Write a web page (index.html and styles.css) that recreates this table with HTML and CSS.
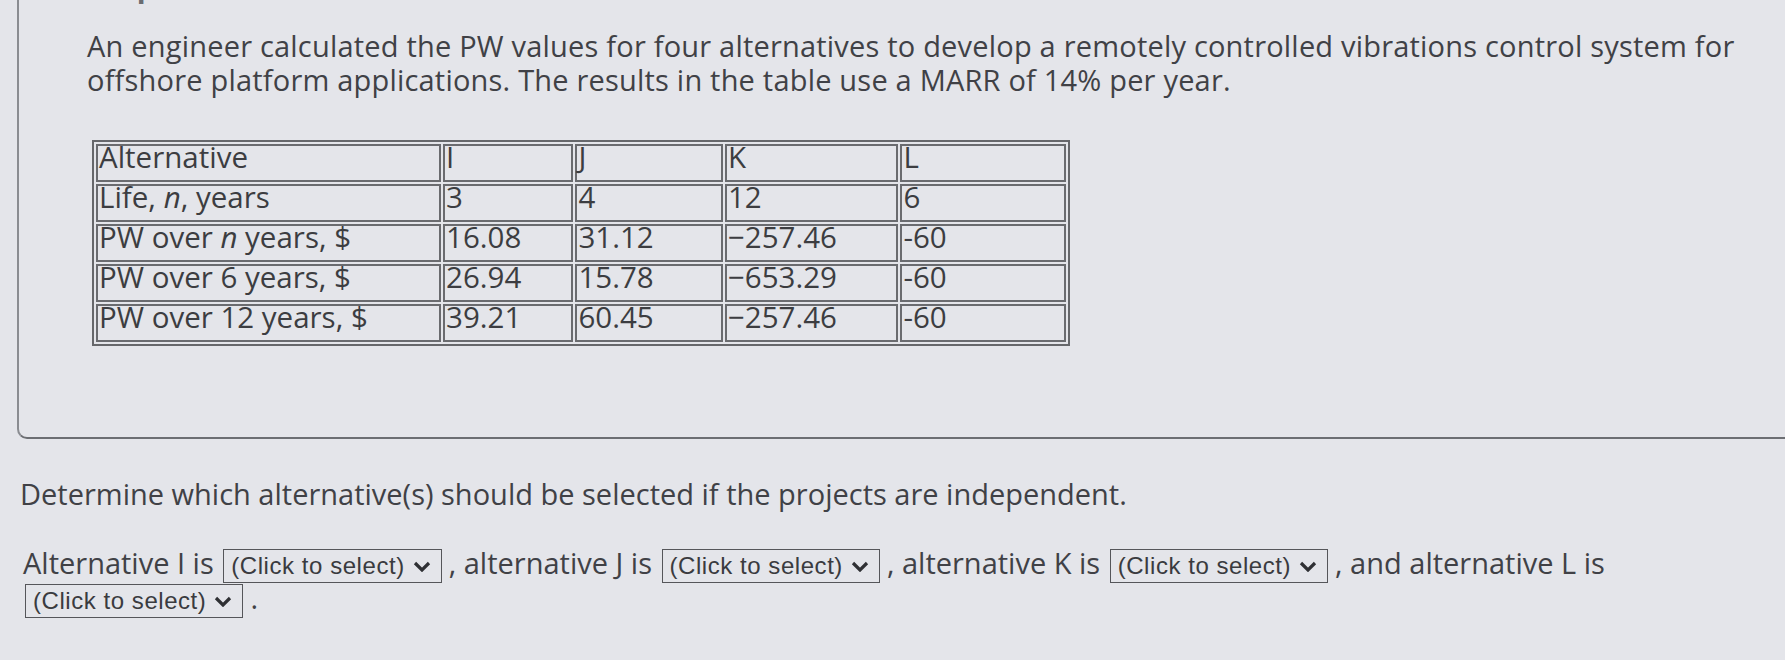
FILE: index.html
```html
<!DOCTYPE html>
<html lang="en">
<head>
<meta charset="utf-8">
<title>PW alternatives</title>
<link rel="stylesheet" href="styles.css">
</head>
<body>
<main class="page">
  <section class="question">
    <h2 class="q-title">Required information</h2>
    <p class="q-text">An engineer calculated the PW values for four alternatives to develop a remotely controlled vibrations control system for offshore platform applications. The results in the table use a MARR of 14% per year.</p>
    <table class="data">
      <tr>
        <td class="c1">Alternative</td>
        <td class="c2">I</td>
        <td class="c3">J</td>
        <td class="c4">K</td>
        <td class="c5">L</td>
      </tr>
      <tr>
        <td>Life, <i>n</i>, years</td>
        <td>3</td>
        <td>4</td>
        <td>12</td>
        <td>6</td>
      </tr>
      <tr>
        <td>PW over <i>n</i> years, $</td>
        <td>16.08</td>
        <td>31.12</td>
        <td>−257.46</td>
        <td>-60</td>
      </tr>
      <tr>
        <td>PW over 6 years, $</td>
        <td>26.94</td>
        <td>15.78</td>
        <td>−653.29</td>
        <td>-60</td>
      </tr>
      <tr>
        <td>PW over 12 years, $</td>
        <td>39.21</td>
        <td>60.45</td>
        <td>−257.46</td>
        <td>-60</td>
      </tr>
    </table>
  </section>

  <p class="prompt">Determine which alternative(s) should be selected if the projects are independent.</p>

  <p class="answer">Alternative I is <span class="select"><span class="select-label">(Click to select)</span><svg class="caret" viewBox="0 0 20 11" width="20" height="11"><polyline points="3,2 10,9 17,2"/></svg></span>, alternative J is <span class="select"><span class="select-label">(Click to select)</span><svg class="caret" viewBox="0 0 20 11" width="20" height="11"><polyline points="3,2 10,9 17,2"/></svg></span>, alternative K is <span class="select"><span class="select-label">(Click to select)</span><svg class="caret" viewBox="0 0 20 11" width="20" height="11"><polyline points="3,2 10,9 17,2"/></svg></span>, and alternative L is <span class="select"><span class="select-label">(Click to select)</span><svg class="caret" viewBox="0 0 20 11" width="20" height="11"><polyline points="3,2 10,9 17,2"/></svg></span>.</p>
</main>
</body>
</html>
```

FILE: styles.css
```css
* {
  box-sizing: border-box;
}

html, body {
  margin: 0;
  padding: 0;
}

body {
  background: #e4e5ea;
  color: #404146;
  font-family: "Open Sans", "Liberation Sans", Arial, sans-serif;
  font-size: 29px;
  line-height: 34px;
  overflow: hidden;
  width: 1785px;
  height: 660px;
}

.page {
  display: flex;
  flex-direction: column;
}

.question {
  margin-left: 17px;
  padding: 0 20px 91px 68px;
  border-left: 2px solid #8a8c91;
  border-bottom: 2px solid #6c6e73;
  border-bottom-left-radius: 10px;
}

.q-title {
  margin: -31px 0 0 4px;
  font-size: 29px;
  line-height: 34px;
  font-weight: 700;
  color: #6a6c71;
}

.q-text {
  margin: 26px 0 0 0;
  letter-spacing: 0.2px;
}

.data {
  margin-top: 43px;
  margin-left: 5px;
  border: 2px solid #66676b;
  border-spacing: 2.5px;
  table-layout: fixed;
  width: 978px;
  font-size: 29.5px;
  line-height: 21px;
  color: #3c3d41;
}

.data td {
  height: 38px;
  border: 2px solid #6a6b6f;
  padding: 0 2px 0 1px;
  vertical-align: top;
  white-space: nowrap;
}

.data .c1 { width: 344px; }
.data .c2 { width: 130px; }
.data .c3 { width: 147px; }
.data .c4 { width: 173px; }
.data .c5 { width: 165px; }

.data i {
  font-style: italic;
}

.prompt {
  margin: 38px 0 0 0;
  padding-left: 20px;
}

.answer {
  margin: 34px 0 0 0;
  padding: 0 12px 0 23px;
  line-height: 35px;
}

.select {
  display: inline-flex;
  align-items: center;
  height: 34px;
  margin: 0 7px -4px 2px;
  padding: 0 9px 0 7px;
  gap: 7px;
  border: 1.5px solid #55565a;
  font-family: "Liberation Sans", Arial, sans-serif;
  font-size: 24px;
  letter-spacing: 0.55px;
  color: #3a3b3f;
  vertical-align: baseline;
}

.select-label {
  line-height: normal;
  white-space: nowrap;
}

.caret {
  display: block;
  flex: none;
}

.caret polyline {
  fill: none;
  stroke: #2f3034;
  stroke-width: 3.2;
  stroke-linejoin: miter;
}
```
